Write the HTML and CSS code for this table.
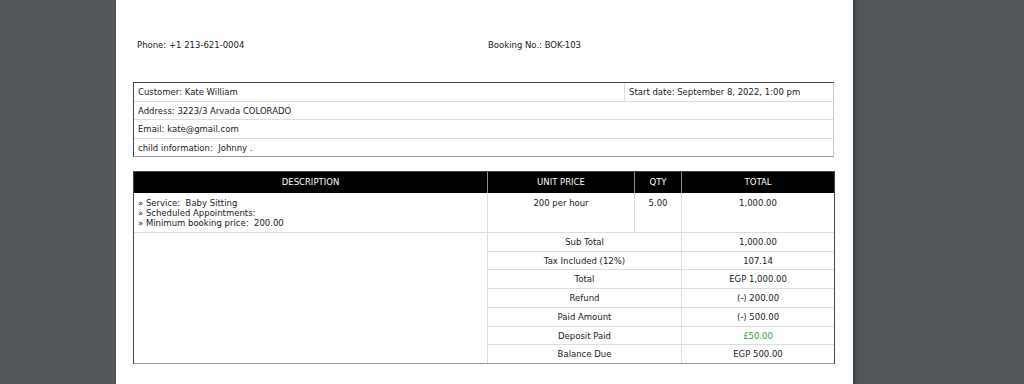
FILE: index.html
```html
<!DOCTYPE html>
<html>
<head>
<meta charset="utf-8">
<link rel="stylesheet" href="styles.css">
</head>
<body>
<div class="viewer">
  <div class="page">
    <div class="top-row">
      <div class="top-left">Phone: +1 213-621-0004</div>
      <div class="top-right">Booking No.: BOK-103</div>
    </div>

    <table class="info">
      <tr>
        <td class="info-cust">Customer: Kate William</td>
        <td class="info-date">Start date: September 8, 2022, 1:00 pm</td>
      </tr>
      <tr><td colspan="2">Address: 3223/3 Arvada COLORADO</td></tr>
      <tr><td colspan="2">Email: kate@gmail.com</td></tr>
      <tr class="last"><td colspan="2">child information:&nbsp; Johnny .</td></tr>
    </table>

    <table class="items">
      <colgroup>
        <col class="c-desc"><col class="c-unit"><col class="c-qty"><col class="c-total">
      </colgroup>
      <tr class="head">
        <th>DESCRIPTION</th>
        <th>UNIT PRICE</th>
        <th>QTY</th>
        <th class="end">TOTAL</th>
      </tr>
      <tr class="item">
        <td class="desc">» Service:&nbsp; Baby Sitting<br>» Scheduled Appointments:<br>» Minimum booking price:&nbsp; 200.00</td>
        <td>200 per hour</td>
        <td>5.00</td>
        <td class="end">1,000.00</td>
      </tr>
      <tr class="sum">
        <td class="blank" rowspan="7"></td>
        <td colspan="2">Sub Total</td>
        <td class="end">1,000.00</td>
      </tr>
      <tr class="sum"><td colspan="2">Tax Included (12%)</td><td class="end">107.14</td></tr>
      <tr class="sum"><td colspan="2">Total</td><td class="end">EGP 1,000.00</td></tr>
      <tr class="sum"><td colspan="2">Refund</td><td class="end">(-) 200.00</td></tr>
      <tr class="sum"><td colspan="2">Paid Amount</td><td class="end">(-) 500.00</td></tr>
      <tr class="sum"><td colspan="2">Deposit Paid</td><td class="end green">£50.00</td></tr>
      <tr class="sum last"><td colspan="2">Balance Due</td><td class="end">EGP 500.00</td></tr>
    </table>
  </div>
</div>
</body>
</html>
```
FILE: styles.css
```css
html, body {
  margin: 0;
  padding: 0;
  background: #525659;
  height: 100%;
  overflow: hidden;
}

.viewer {
  padding-left: 116px;
}

.page {
  width: 737px;
  min-height: 384px;
  background: #fff;
  box-sizing: border-box;
  padding: 40px 19px 0 17px;
  font-family: "DejaVu Sans", sans-serif;
  font-size: 8.5px;
  color: #1a1a1a;
  box-shadow: 2px 0 3px rgba(0, 0, 0, 0.35);
}

.top-row {
  display: flex;
  line-height: 10px;
}

.top-left {
  width: 351px;
  padding-left: 4px;
}

table {
  border-collapse: separate;
  border-spacing: 0;
  width: 701px;
  table-layout: fixed;
}

.info {
  margin-top: 32px;
  border-top: 1px solid #444;
  border-left: 1px solid #444;
  border-right: 1px solid #c8c8c8;
  border-bottom: 1px solid #999;
}

.info td {
  padding: 1px 4px 0;
  line-height: 16.5px;
  height: 16.5px;
  border-bottom: 1px solid #ddd;
  white-space: nowrap;
}

.info tr.last td {
  border-bottom: none;
}

.info .info-cust {
  width: 482px;
  border-right: 1px solid #ddd;
}

.items {
  margin-top: 14px;
  border-top: 1px solid #444;
  border-left: 1px solid #444;
  border-right: 1px solid #444;
  border-bottom: 1px solid #999;
}

.c-desc { width: 354px; }
.c-unit { width: 147px; }
.c-qty { width: 47px; }
.c-total { width: 152px; }

.items th {
  background: #000;
  color: #fff;
  font-weight: normal;
  height: 21px;
  padding: 0;
  line-height: 21px;
  text-align: center;
  border-right: 1px solid #8a8a8a;
}

.items th.end,
.items td.end {
  border-right: none;
}

.items td {
  padding: 0 4px;
  text-align: center;
  border-right: 1px solid #ddd;
  border-bottom: 1px solid #ddd;
}

.items .item td {
  vertical-align: top;
  padding-top: 5px;
  line-height: 10px;
  height: 34px;
}

.items .item td.desc {
  text-align: left;
}

.items .sum td {
  line-height: 16.7px;
  height: 16.7px;
  padding-top: 1px;
  padding-bottom: 0;
}

.items .sum td.blank {
  border-bottom: none;
}

.items .sum.last td {
  border-bottom: none;
}

.green {
  color: #2f9e3b;
}
```
